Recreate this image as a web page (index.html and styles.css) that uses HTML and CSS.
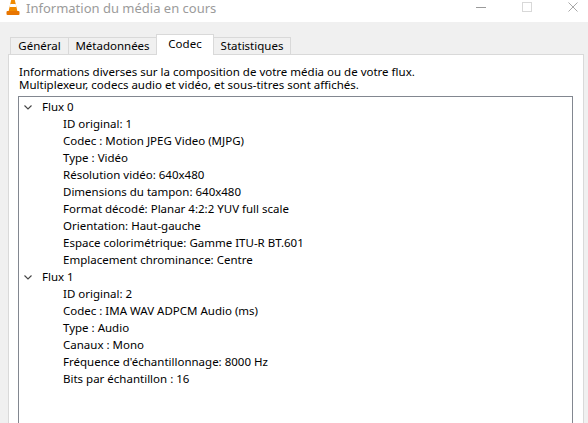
FILE: index.html
```html
<!DOCTYPE html>
<html lang="fr">
<head>
<meta charset="utf-8">
<title>Information du média en cours</title>
<link rel="stylesheet" href="styles.css">
</head>
<body>
<div class="window">
  <header class="titlebar">
    <svg class="app-icon" width="14" height="16" viewBox="0 0 14 16" aria-hidden="true">
      <path d="M5.2 0 L8.8 0 L11.6 12 L2.4 12 Z" fill="#f08a00"/>
      <path d="M4.3 4 L9.7 4 L10.4 7 L3.6 7 Z" fill="#ffffff"/>
      <path d="M0.5 12 Q0.5 11 1.5 11 L12.5 11 Q13.5 11 13.5 12 L13.5 14 Q13.5 15 12.5 15 L1.5 15 Q0.5 15 0.5 14 Z" fill="#e87500"/>
    </svg>
    <span class="title">Information du média en cours</span>
    <div class="controls">
      <svg class="ctl" width="12" height="12" viewBox="0 0 12 12"><path d="M1 6.5 H11" stroke="#9a9a9a" stroke-width="1"/></svg>
      <svg class="ctl" width="12" height="12" viewBox="0 0 12 12"><rect x="1.5" y="1.5" width="9" height="9" fill="none" stroke="#d8d8d8" stroke-width="1"/></svg>
      <svg class="ctl" width="12" height="12" viewBox="0 0 12 12"><path d="M1.5 1.5 L10.5 10.5 M10.5 1.5 L1.5 10.5" stroke="#a8a8a8" stroke-width="1"/></svg>
    </div>
  </header>

  <nav class="tabs">
    <div class="tab tab-general">Général</div>
    <div class="tab tab-meta">Métadonnées</div>
    <div class="tab tab-codec active">Codec</div>
    <div class="tab tab-stats">Statistiques</div>
  </nav>

  <section class="panel">
    <p class="desc"><span class="line">Informations diverses sur la composition de votre média ou de votre flux.</span><span class="line">Multiplexeur, codecs audio et vidéo, et sous-titres sont affichés.</span></p>
    <div class="tree">
      <div class="node">
        <div class="row parent"><svg class="chev" width="8" height="5" viewBox="0 0 8 5"><path d="M0.5 0.5 L4 4 L7.5 0.5" fill="none" stroke="#444" stroke-width="1.1"/></svg><span>Flux 0</span></div>
        <div class="row child">ID original: 1</div>
        <div class="row child">Codec : Motion JPEG Video (MJPG)</div>
        <div class="row child">Type : Vidéo</div>
        <div class="row child">Résolution vidéo: 640x480</div>
        <div class="row child">Dimensions du tampon: 640x480</div>
        <div class="row child">Format décodé: Planar 4:2:2 YUV full scale</div>
        <div class="row child">Orientation: Haut-gauche</div>
        <div class="row child">Espace colorimétrique: Gamme ITU-R BT.601</div>
        <div class="row child">Emplacement chrominance: Centre</div>
      </div>
      <div class="node">
        <div class="row parent"><svg class="chev" width="8" height="5" viewBox="0 0 8 5"><path d="M0.5 0.5 L4 4 L7.5 0.5" fill="none" stroke="#444" stroke-width="1.1"/></svg><span>Flux 1</span></div>
        <div class="row child">ID original: 2</div>
        <div class="row child">Codec : IMA WAV ADPCM Audio (ms)</div>
        <div class="row child">Type : Audio</div>
        <div class="row child">Canaux : Mono</div>
        <div class="row child">Fréquence d'échantillonnage: 8000 Hz</div>
        <div class="row child">Bits par échantillon : 16</div>
      </div>
    </div>
  </section>
</div>
</body>
</html>
```

FILE: styles.css
```css
* { box-sizing: border-box; }
html, body {
  margin: 0;
  padding: 0;
  width: 588px;
  height: 423px;
  overflow: hidden;
  background: #f0f0f0;
}
.window {
  width: 588px;
  height: 423px;
  display: flex;
  flex-direction: column;
  font-family: "Noto Sans", "Open Sans", sans-serif;
  font-size: 11.5px;
  color: #000;
}
.titlebar {
  height: 22px;
  flex: none;
  background: #fff;
  display: flex;
  align-items: flex-start;
  padding-left: 6px;
}
.app-icon { flex: none; }
.title {
  margin-left: 6px;
  font-size: 13px;
  line-height: 18px;
  margin-top: -1px;
  color: #9b9b9b;
  white-space: nowrap;
}
.controls {
  margin-left: auto;
  display: flex;
  gap: 34px;
  padding-right: 9px;
  padding-top: 1px;
}
.tabs {
  height: 32px;
  flex: none;
  display: flex;
  align-items: flex-end;
  padding-left: 10px;
}
.tab {
  height: 17px;
  border: 1px solid #d9d9d9;
  border-bottom: none;
  background: #f0f0f0;
  line-height: 15px;
  text-align: center;
  margin-left: -1px;
  white-space: nowrap;
}
.tab:first-child { margin-left: 0; }
.tab-general { width: 59px; }
.tab-meta { width: 89px; }
.tab-codec { width: 58px; }
.tab-stats { width: 78px; }
.tab.active {
  height: 21px;
  margin-bottom: -1px;
  background: #fff;
  position: relative;
  z-index: 1;
  line-height: 17px;
}
.panel {
  flex: 1;
  margin: 0 4px 0 8px;
  background: #fff;
  border: 1px solid #d9d9d9;
  border-bottom: none;
  padding: 0 10px 0 9px;
  min-height: 0;
}
.desc {
  margin: 10px 0 0 1px;
  white-space: nowrap;
}
.desc .line {
  display: block;
  height: 13px;
  line-height: 13px;
}
.tree {
  margin-top: 5px;
  border: 1px solid #828790;
  border-bottom: none;
  height: 340px;
  padding-top: 1px;
}
.row {
  height: 17px;
  display: flex;
  align-items: center;
  white-space: nowrap;
}
.row.parent { padding-left: 5px; }
.chev { flex: none; margin-right: 10px; margin-top: 1px; }
.row.child { padding-left: 44px; }
```
